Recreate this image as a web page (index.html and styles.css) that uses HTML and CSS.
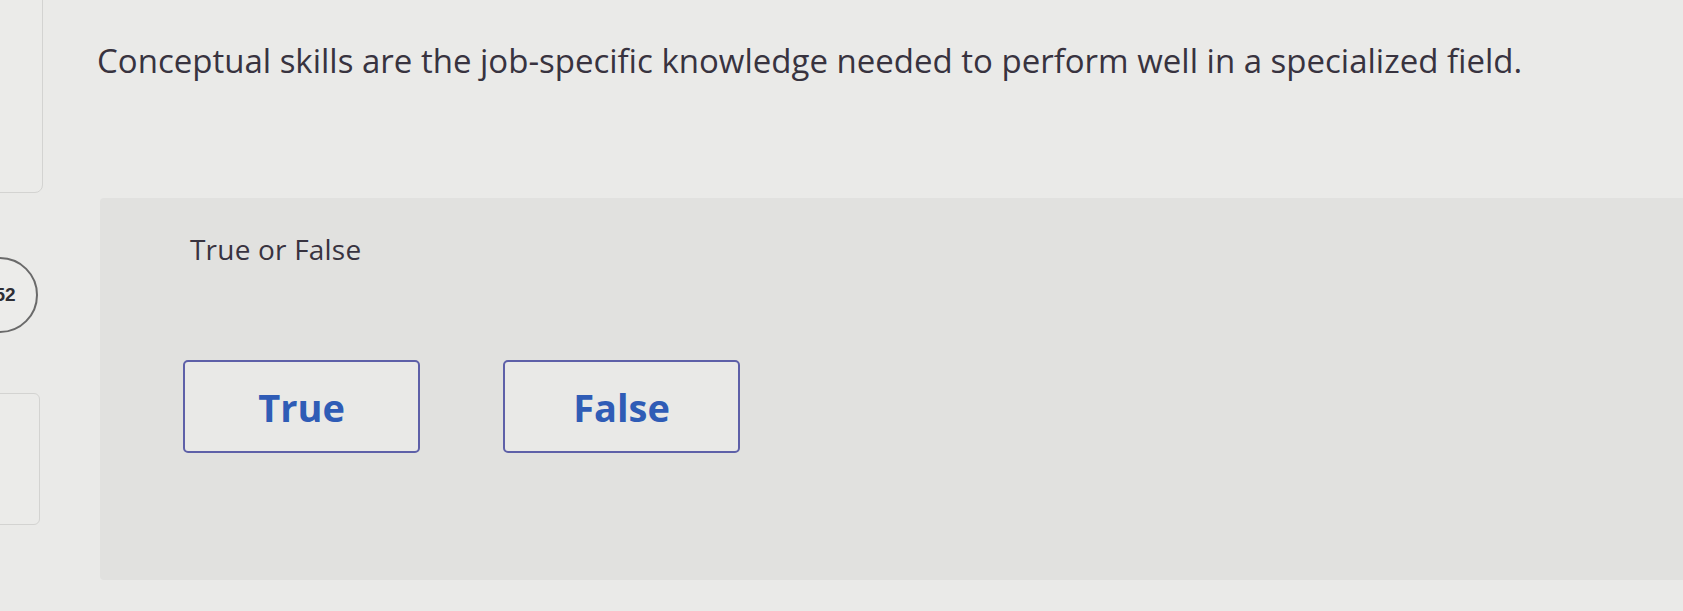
FILE: index.html
```html
<!DOCTYPE html>
<html lang="en">
<head>
<meta charset="utf-8">
<title>True or False question</title>
<link rel="stylesheet" href="styles.css">
</head>
<body>
<div class="page">
  <aside class="rail">
    <div class="rail-card rail-card-top"></div>
    <div class="badge"><span class="badge-num">52</span></div>
    <div class="rail-card rail-card-bottom"></div>
  </aside>
  <main class="main">
    <h1 class="question">Conceptual skills are the job-specific knowledge needed to perform well in a specialized field.</h1>
    <section class="answer-panel">
      <p class="prompt">True or False</p>
      <div class="choices">
        <button class="choice" type="button">True</button>
        <button class="choice" type="button">False</button>
      </div>
    </section>
  </main>
</div>
</body>
</html>
```

FILE: styles.css
```css
* { box-sizing: border-box; }

html, body {
  margin: 0;
  padding: 0;
  background: #eaeae8;
  font-family: "Open Sans", "Liberation Sans", Arial, sans-serif;
  color: #3b3640;
  overflow: hidden;
}

.page {
  display: grid;
  grid-template-columns: 97px 1fr;
  height: 611px;
}

.rail {
  display: flex;
  flex-direction: column;
  align-items: flex-start;
  overflow: hidden;
}

.rail-card {
  border: 1.5px solid #d3d3d1;
  border-radius: 8px;
  background: #ebebe9;
}

.rail-card-top {
  width: 53px;
  height: 203px;
  margin-top: -10px;
  margin-left: -10px;
}

.badge {
  width: 76px;
  height: 76px;
  margin-top: 64px;
  margin-left: -38px;
  border: 2px solid #6a6a6a;
  border-radius: 50%;
  background: #ececea;
  display: flex;
  align-items: center;
  justify-content: center;
}

.badge-num {
  font-family: "Liberation Sans", Arial, sans-serif;
  font-weight: 700;
  font-size: 19px;
  color: #2e2e35;
  margin-left: 10px;
}

.rail-card-bottom {
  width: 50px;
  height: 132px;
  margin-top: 60px;
  margin-left: -10px;
  border-radius: 6px;
}

.main {
  display: flex;
  flex-direction: column;
  padding-top: 41px;
}

.question {
  margin: 0;
  font-weight: 400;
  font-size: 33px;
  line-height: 40px;
  color: #38333f;
  white-space: nowrap;
}

.answer-panel {
  margin-top: 117px;
  margin-left: 3px;
  height: 382px;
  background: #e1e1df;
  border-radius: 4px 0 0 4px;
  padding: 34px 0 0 83px;
}

.prompt {
  margin: 0 0 0 7px;
  font-size: 28px;
  line-height: 34px;
  letter-spacing: 0.2px;
  color: #38333f;
}

.choices {
  display: flex;
  gap: 83px;
  margin-top: 94px;
}

.choice {
  width: 237px;
  height: 93px;
  border: 2px solid #5e60a8;
  border-radius: 5px;
  background: #e9e9e7;
  font-family: "Open Sans", "Liberation Sans", Arial, sans-serif;
  font-weight: 700;
  font-size: 38px;
  color: #2f5cb6;
  padding: 0;
  cursor: pointer;
}
```
